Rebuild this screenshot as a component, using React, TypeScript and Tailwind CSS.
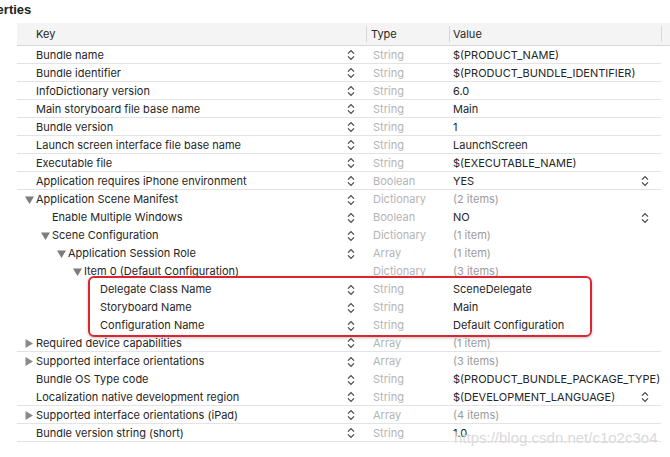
import React from "react";

type Row = {
  k: string;
  level: number;
  tri?: "down" | "right";
  type: string;
  value: string;
  gray?: boolean;
  right?: boolean;
  line?: boolean;
  noStep?: boolean;
};

const rows: Row[] = [
  { k: "Bundle name", level: 0, type: "String", value: "$(PRODUCT_NAME)", line: true },
  { k: "Bundle identifier", level: 0, type: "String", value: "$(PRODUCT_BUNDLE_IDENTIFIER)", line: true },
  { k: "InfoDictionary version", level: 0, type: "String", value: "6.0", line: true },
  { k: "Main storyboard file base name", level: 0, type: "String", value: "Main", line: true },
  { k: "Bundle version", level: 0, type: "String", value: "1", line: true },
  { k: "Launch screen interface file base name", level: 0, type: "String", value: "LaunchScreen", line: true },
  { k: "Executable file", level: 0, type: "String", value: "$(EXECUTABLE_NAME)", line: true },
  { k: "Application requires iPhone environment", level: 0, type: "Boolean", value: "YES", right: true, line: true },
  { k: "Application Scene Manifest", level: 0, tri: "down", type: "Dictionary", value: "(2 items)", gray: true },
  { k: "Enable Multiple Windows", level: 1, type: "Boolean", value: "NO", right: true },
  { k: "Scene Configuration", level: 1, tri: "down", type: "Dictionary", value: "(1 item)", gray: true },
  { k: "Application Session Role", level: 2, tri: "down", type: "Array", value: "(1 item)", gray: true },
  { k: "Item 0 (Default Configuration)", level: 3, tri: "down", type: "Dictionary", value: "(3 items)", gray: true, noStep: true },
  { k: "Delegate Class Name", level: 4, type: "String", value: "SceneDelegate" },
  { k: "Storyboard Name", level: 4, type: "String", value: "Main" },
  { k: "Configuration Name", level: 4, type: "String", value: "Default Configuration" },
  { k: "Required device capabilities", level: 0, tri: "right", type: "Array", value: "(1 item)", gray: true, line: true },
  { k: "Supported interface orientations", level: 0, tri: "right", type: "Array", value: "(3 items)", gray: true },
  { k: "Bundle OS Type code", level: 0, type: "String", value: "$(PRODUCT_BUNDLE_PACKAGE_TYPE)" },
  { k: "Localization native development region", level: 0, type: "String", value: "$(DEVELOPMENT_LANGUAGE)", right: true, line: true },
  { k: "Supported interface orientations (iPad)", level: 0, tri: "right", type: "Array", value: "(4 items)", gray: true, line: true },
  { k: "Bundle version string (short)", level: 0, type: "String", value: "1.0", line: true },
];

function Stepper() {
  return (
    <svg width="8" height="12" viewBox="0 0 8 12" className="block">
      <path d="M1 4.6 L4 1.6 L7 4.6" fill="none" stroke="#4a4a4a" strokeWidth="1.3" />
      <path d="M1 7.4 L4 10.4 L7 7.4" fill="none" stroke="#4a4a4a" strokeWidth="1.3" />
    </svg>
  );
}

function Tri({ dir }: { dir: "down" | "right" }) {
  return dir === "down" ? (
    <svg width="9" height="8" viewBox="0 0 9 8" className="block">
      <path d="M0 0.5 L9 0.5 L4.5 8 Z" fill="#7d7d7d" />
    </svg>
  ) : (
    <svg width="8" height="9" viewBox="0 0 8 9" className="block">
      <path d="M0.5 0 L8 4.5 L0.5 9 Z" fill="#8a8a8a" />
    </svg>
  );
}

export default function App() {
  return (
    <div
      className="w-[670px] h-[457px] bg-white overflow-hidden relative text-[11px] text-[#262626]"
      style={{ fontFamily: 'Inter, "Liberation Sans", Arial, sans-serif' }}
    >
      <div className="h-[23px] overflow-hidden">
        <div className="ml-[-33px] pt-[2px] text-[13px] font-bold leading-[16px] text-[#222]" style={{ fontFamily: '"Liberation Sans", Arial, sans-serif' }}>Properties</div>
      </div>
      <div className="ml-[17px] relative">
        {/* header */}
        <div className="flex h-[23px] bg-[#f4f4f4] border-b border-[#d6d6d6] items-center">
          <div className="w-[349px] pl-[19px]">Key</div>
          <div className="w-[83px] h-[16px] border-l border-[#d8d8d8] pl-[4px] flex items-center">Type</div>
          <div className="w-[212px] h-[16px] border-l border-[#d8d8d8] pl-[3px] flex items-center">Value</div>
          <div className="h-[16px] border-l border-[#d8d8d8]" />
        </div>
        {rows.map((r, i) => (
          <div key={i} className="flex">
            <div className={`flex w-[644px] h-[18px] items-center pt-[1px] ${r.line ? "border-b border-[#e3e3e3]" : ""}`}>
              <div className="w-[349px] flex items-center h-full">
                <div className="flex items-center flex-1 h-full" style={{ paddingLeft: 8 + r.level * 16 }}>
                  <div className="w-[11px] flex items-center justify-start">{r.tri ? <Tri dir={r.tri} /> : null}</div>
                  <span className="whitespace-nowrap">{r.k}</span>
                </div>
                <div className="w-[20px] flex items-center justify-start pl-[1px]">{r.noStep ? null : <Stepper />}</div>
              </div>
              <div className="w-[83px] pl-[7px] text-[#b4b4b4]">{r.type}</div>
              <div className="w-[212px] pl-[4px] flex items-center justify-between pr-[12px]">
                <span className={`whitespace-nowrap ${r.gray ? "text-[#9b9b9b]" : ""}`}>{r.value}</span>
                {r.right ? <Stepper /> : null}
              </div>
            </div>
          </div>
        ))}
        {/* red highlight box */}
        <div className="absolute left-[71px] top-[253px] w-[504px] h-[61px] border-[2.5px] border-[#dc2530] rounded-[6px] shadow-[0_1px_3px_rgba(0,0,0,0.25)]" />
      </div>
      <div
        className="absolute left-[454px] top-[428px] text-[15px] leading-[20px] text-[#dadada] whitespace-nowrap"
        style={{ fontFamily: '"Liberation Sans", Arial, sans-serif' }}
      >
        https://blog.csdn.net/c1o2c3o4
      </div>
    </div>
  );
}
